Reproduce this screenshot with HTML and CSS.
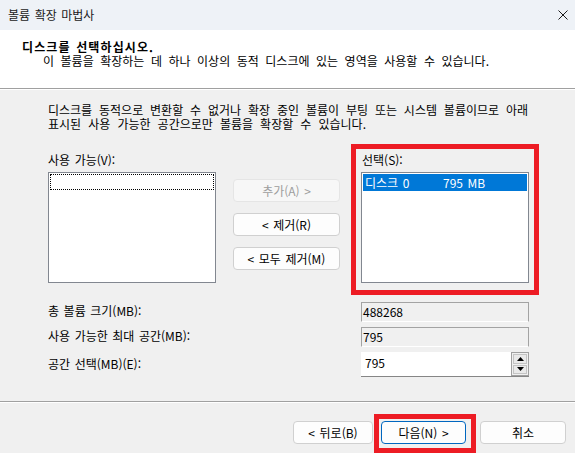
FILE: index.html
```html
<!DOCTYPE html>
<html lang="ko">
<head>
<meta charset="utf-8">
<title>볼륨 확장 마법사</title>
<link rel="stylesheet" href="styles.css">
</head>
<body>
<div class="window">
  <div class="titlebar">
    <span class="title">볼륨 확장 마법사</span>
    <svg class="close" viewBox="0 0 10 10" width="10" height="10"><path d="M0.5 0.5 L9.5 9.5 M9.5 0.5 L0.5 9.5" stroke="#1b1b1b" stroke-width="1" fill="none"/></svg>
  </div>
  <div class="header">
    <div class="h-title">디스크를 선택하십시오.</div>
    <div class="h-sub">이 볼륨을 확장하는 데 하나 이상의 동적 디스크에 있는 영역을 사용할 수 있습니다.</div>
  </div>
  <div class="content">
    <p class="desc"><span class="line l1">디스크를 동적으로 변환할 수 없거나 확장 중인 볼륨이 부팅 또는 시스템 볼륨이므로 아래</span><span class="line l2">표시된 사용 가능한 공간으로만 볼륨을 확장할 수 있습니다.</span></p>
    <div class="picker">
      <div class="col">
        <div class="label">사용 가능(V):</div>
        <div class="listbox"><div class="focus"></div></div>
      </div>
      <div class="mid">
        <button class="btn disabled">추가(A) &gt;</button>
        <button class="btn">&lt; 제거(R)</button>
        <button class="btn">&lt; 모두 제거(M)</button>
      </div>
      <div class="col">
        <div class="label">선택(S):</div>
        <div class="listbox"><div class="item selected"><span class="name">디스크 0</span><span class="size">795 MB</span></div></div>
      </div>
    </div>
    <div class="fields">
      <span class="flabel">총 볼륨 크기(MB):</span><div class="field ro">488268</div>
      <span class="flabel">사용 가능한 최대 공간(MB):</span><div class="field ro">795</div>
      <span class="flabel">공간 선택(MB)(E):</span>
      <div class="spin">
        <span class="spin-value">795</span>
        <div class="spin-btns">
          <span class="sbtn"><svg viewBox="0 0 7 4" width="7" height="4"><path d="M3.5 0 L7 4 L0 4 Z" fill="#000"/></svg></span>
          <span class="sbtn"><svg viewBox="0 0 7 4" width="7" height="4"><path d="M0 0 L7 0 L3.5 4 Z" fill="#000"/></svg></span>
        </div>
      </div>
    </div>
  </div>
  <div class="footer">
    <button class="btn fbtn back">&lt; 뒤로(B)</button>
    <button class="btn fbtn next default">다음(N) &gt;</button>
    <button class="btn fbtn cancel">취소</button>
  </div>
  <div class="highlight hl-list"></div>
  <div class="highlight hl-next"></div>
</div>
</body>
</html>
```
FILE: styles.css
```css
* { box-sizing: border-box; margin: 0; padding: 0; }
html, body { width: 575px; height: 453px; overflow: hidden; }
body {
  font-family: "Noto Sans CJK KR", "Noto Sans", sans-serif;
  font-size: 12px;
  line-height: 14px;
  word-spacing: 1.2px;
  color: #000;
  background: #f0f0f0;
}
.window {
  position: relative;
  width: 575px;
  height: 453px;
  display: flex;
  flex-direction: column;
}
.titlebar {
  height: 30px;
  flex: none;
  background: #eef2f7;
  display: flex;
  align-items: center;
  justify-content: space-between;
  padding: 0 7px 0 8px;
  color: #1a1a1a;
}
.close { display: block; }
.header {
  height: 59px;
  flex: none;
  background: #fff;
  border-bottom: 1px solid #a0a0a0;
  padding: 10px 0 0 22px;
}
.h-title { font-weight: bold; letter-spacing: 1.1px; }
.h-sub {
  margin-left: 21px;
  width: 446px;
  word-spacing: 0;
  text-align: justify;
  text-align-last: justify;
}
.content {
  flex: 1;
  border-top: 1px solid #fff;
  padding: 13px 0 0 48px;
}
.desc { display: flex; flex-direction: column; align-items: flex-start; }
.line {
  display: block;
  height: 14px;
  word-spacing: 0;
  text-align: justify;
  text-align-last: justify;
}
.l1 { width: 480px; }
.l2 { width: 318px; }
.picker {
  display: flex;
  align-items: flex-start;
  margin-top: 22px;
}
.col { width: 168px; display: flex; flex-direction: column; }
.label { height: 14px; margin-bottom: 5px; }
.col:last-child .label { padding-left: 1px; }
.listbox {
  height: 111px;
  background: #fff;
  border: 1px solid #828790;
  padding: 1px;
}
.focus {
  height: 16px;
  border: 1px dotted #000;
}
.item {
  height: 17px;
  display: flex;
  align-items: center;
  padding-left: 2px;
  color: #fff;
}
.item.selected { background: #0078d7; }
.item .name { width: 78px; }
.mid {
  width: 107px;
  margin: 0 21px 0 17px;
  padding-top: 26px;
  display: flex;
  flex-direction: column;
  gap: 11px;
}
.btn {
  font: inherit;
  word-spacing: inherit;
  height: 23px;
  background: #fdfdfd;
  border: 1px solid #d0d0d0;
  border-radius: 4px;
  color: #000;
  line-height: 14px;
}
.btn.disabled {
  background: #f7f7f7;
  border-color: #e5e5e5;
  color: #9d9d9d;
}
.fields {
  width: 481px;
  margin-top: 19px;
  display: grid;
  grid-template-columns: 1fr 168px;
  grid-template-rows: 20px 20px 25px;
  row-gap: 5px;
  align-items: center;
}
.flabel { align-self: center; margin-top: -2px; }
.field {
  height: 20px;
  padding: 2px 0 0 1px;
  border: 1px solid #a3a3a3;
  border-bottom-color: #fff;
  background: #f0f0f0;
}
.spin {
  height: 25px;
  display: flex;
  background: #fff;
  border-bottom: 1px solid #868686;
}
.spin-value { flex: 1; padding: 4px 0 0 4px; }
.spin-btns {
  width: 18px;
  display: flex;
  flex-direction: column;
  border: 1px solid #a0a0a0;
  background: #f0f0f0;
  padding: 1px;
  gap: 1px;
}
.sbtn {
  flex: 1;
  display: flex;
  align-items: center;
  justify-content: center;
  background: #e9e9e9;
  border: 1px solid #c4c4c4;
}
.sbtn svg { display: block; }
.footer {
  height: 52px;
  flex: none;
  border-top: 1px solid #a0a0a0;
  box-shadow: inset 0 1px #fff;
  display: flex;
  justify-content: flex-end;
  align-items: flex-start;
  padding: 19px 9px 0 0;
}
.fbtn.back { width: 80px; }
.fbtn.next { width: 85px; margin-left: 8px; }
.fbtn.cancel { width: 86px; margin-left: 14px; }
.btn.default { border-color: #0067c0; }
.highlight {
  position: absolute;
  border: 5px solid #ed1c24;
  pointer-events: none;
}
.hl-list { left: 351px; top: 144px; width: 188px; height: 151px; }
.hl-next { left: 374px; top: 414px; width: 102px; height: 39px; }
```
